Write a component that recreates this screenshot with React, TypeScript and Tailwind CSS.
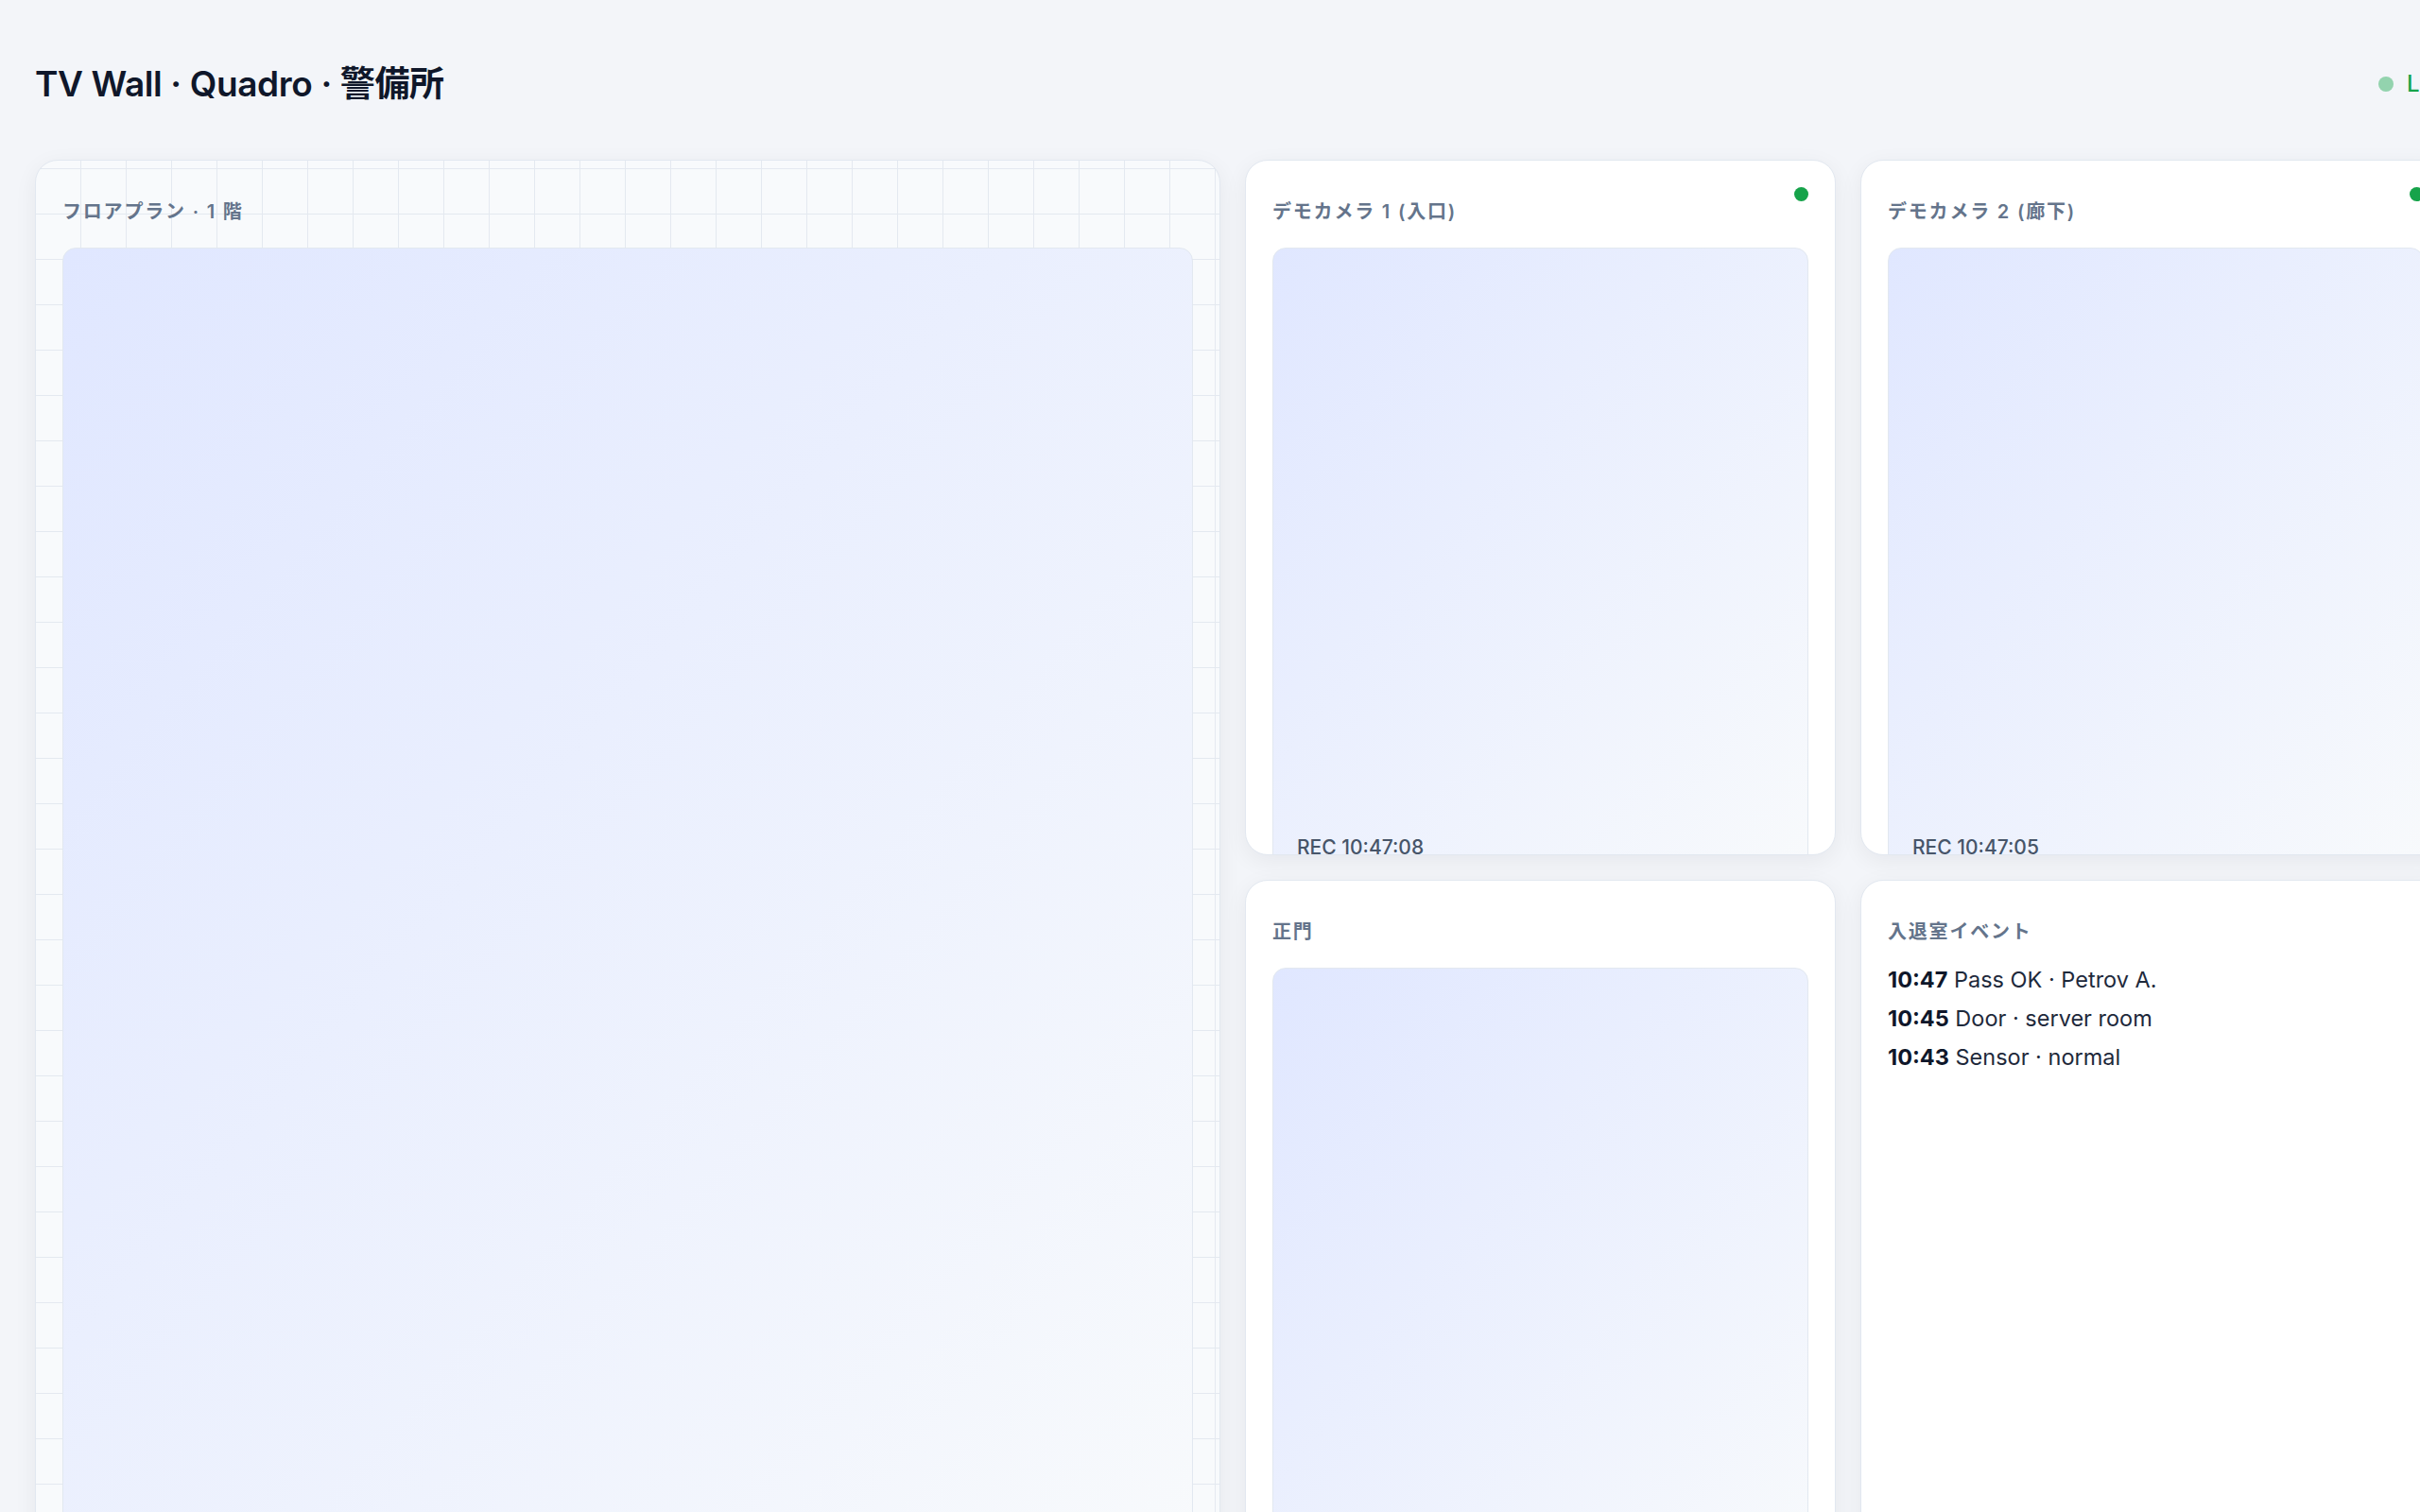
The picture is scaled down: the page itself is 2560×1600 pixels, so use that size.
const font = "font-['Inter','Noto_Sans_CJK_JP',sans-serif]";

const events = [
  { time: "10:47", text: "Pass OK · Petrov A." },
  { time: "10:45", text: "Door · server room" },
  { time: "10:43", text: "Sensor · normal" },
];

function Label({ children }: { children: React.ReactNode }) {
  return (
    <span className="mt-[2px] text-[20px] font-semibold leading-[48px] tracking-[0.09em] text-[#64748b]">
      {children}
    </span>
  );
}

function Feed({ rec, tall }: { rec?: string; tall?: boolean }) {
  return (
    <div
      className={`relative shrink-0 rounded-[14px] border border-[#e2e8f0] bg-linear-to-br from-[#e0e7ff] to-[#f8fafc] ${
        tall ? "h-[1400px]" : "h-[660px]"
      }`}
    >
      {rec && (
        <span className="absolute bottom-[10px] left-[25px] text-[21px] font-medium leading-[28px] text-[#475569]">
          {rec}
        </span>
      )}
    </div>
  );
}

function Card({
  title,
  live,
  children,
  className = "",
}: {
  title: string;
  live?: boolean;
  children?: React.ReactNode;
  className?: string;
}) {
  return (
    <section
      className={`flex flex-col overflow-hidden rounded-[24px] border border-[#e2e8f0] p-[28px] shadow-[0_6px_24px_rgba(15,23,42,0.06)] ${className}`}
    >
      <div className="mb-4 flex h-[48px] shrink-0 items-start justify-between">
        <Label>{title}</Label>
        {live && <span className="h-[15px] w-[15px] rounded-full bg-[#16a34a]" />}
      </div>
      {children}
    </section>
  );
}

export default function App() {
  return (
    <div className={`h-screen w-screen overflow-hidden bg-[#f3f5f9] ${font}`}>
      <div className="w-[2630px] px-[37px] pt-[66px]">
        <header className="mb-[57px] flex h-[46px] items-center justify-between">
          <h1 className="text-[37px] font-semibold leading-[46px] tracking-[-0.01em] text-[#0f172a]">
            TV Wall · Quadro · 警備所
          </h1>
          <div className="flex items-center gap-[14px]">
            <span className="h-[16px] w-[16px] rounded-full bg-[#93d3ae]" />
            <span className="text-[24px] font-medium text-[#16a34a]">Live</span>
          </div>
        </header>

        <div className="grid grid-cols-[1254px_625px_625px] grid-rows-[736px_736px] gap-[26px]">
          <Card
            title="フロアプラン · 1 階"
            className="row-span-2 bg-[#f8fafc] bg-[linear-gradient(to_right,#e4e9f0_1px,transparent_1px),linear-gradient(to_bottom,#e4e9f0_1px,transparent_1px)] bg-[size:48px_48px] bg-[position:47px_8px]"
          >
            <Feed tall />
          </Card>

          <Card title="デモカメラ 1 (入口)" live className="bg-white">
            <Feed rec="REC 10:47:08" />
          </Card>

          <Card title="デモカメラ 2 (廊下)" live className="bg-white">
            <Feed rec="REC 10:47:05" />
          </Card>

          <Card title="正門" className="bg-white">
            <Feed />
          </Card>

          <Card title="入退室イベント" className="bg-white">
            <ul className="-mt-2 text-[23.5px] leading-[41px] text-[#1e293b]">
              {events.map((e) => (
                <li key={e.time}>
                  <span className="font-bold text-[#0f172a]">{e.time}</span> {e.text}
                </li>
              ))}
            </ul>
          </Card>
        </div>
      </div>
    </div>
  );
}
